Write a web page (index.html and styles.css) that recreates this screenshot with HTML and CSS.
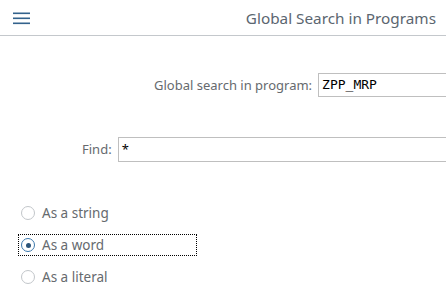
FILE: index.html
```html
<!DOCTYPE html>
<html lang="en">
    <head>
        <meta charset="UTF-8" />
        <meta name="viewport" content="width=device-width, initial-scale=1.0" />
        <title>Global Search in Programs</title>
        <link rel="stylesheet" href="styles.css">
    </head>
    <body>
        <!-- Shell header -->
        <div class="shell-bar">
            <button class="menu-btn" aria-label="Menu">
                <svg width="17" height="13" viewBox="0 0 17 13">
                    <rect x="0" y="0.5" width="17" height="1.6" />
                    <rect x="0" y="5.5" width="17" height="1.6" />
                    <rect x="0" y="10.5" width="17" height="1.6" />
                </svg>
            </button>
            <div class="shell-title">Global Search in Programs</div>
        </div>

        <!-- Selection screen -->
        <div class="screen">
            <div class="field-row row-program">
                <label class="field-label" for="program">Global search in program:</label>
                <div class="field-input mono" id="program">ZPP_MRP</div>
            </div>

            <div class="field-row row-find">
                <label class="field-label" for="find">Find:</label>
                <div class="field-input" id="find">*</div>
            </div>

            <div class="radio-group">
                <div class="radio-row">
                    <span class="radio"></span>
                    <span class="radio-text">As a string</span>
                </div>
                <div class="radio-row focused">
                    <span class="radio checked"></span>
                    <span class="radio-text">As a word</span>
                </div>
                <div class="radio-row">
                    <span class="radio"></span>
                    <span class="radio-text">As a literal</span>
                </div>
            </div>
        </div>
    </body>
</html>
```

FILE: styles.css
```css
/* page */
body {
    margin: 0;
    background-color: #ffffff;
    font-family: "Noto Sans", "Liberation Sans", sans-serif;
    overflow: hidden;
}

/* Shell header */
.shell-bar {
    height: 35px;
    border-bottom: 1px solid #c4c8cc;
    display: flex;
    align-items: center;
    justify-content: space-between;
    padding: 0 10px 0 13px;
}

.menu-btn {
    background: none;
    border: none;
    padding: 0;
    margin-top: 1px;
    display: flex;
}

.menu-btn svg {
    fill: #33628c;
}

.shell-title {
    font-size: 15.3px;
    color: #5b6670;
    margin-top: 1px;
}

/* Selection screen */
.screen {
    padding-top: 37px;
}

.field-row {
    display: flex;
    align-items: center;
    height: 24px;
}

.row-program {
    padding-left: 148px;
}

.row-find {
    margin-top: 40px;
    padding-left: 76px;
}

.field-label {
    font-size: 13px;
    color: #666a6e;
    padding: 0 6px;
    white-space: nowrap;
    flex-shrink: 0;
}

.field-input {
    box-sizing: border-box;
    height: 24px;
    flex: 1;
    min-width: 0;
    border: 1px solid #bfbfbf;
    border-right: none;
    padding: 0 3px;
    font-size: 13px;
    line-height: 22px;
    color: #000000;
}

.row-find .field-input {
    height: 25px;
}

.mono {
    font-family: "DejaVu Sans Mono", "Liberation Mono", monospace;
}

/* Radio buttons */
.radio-group {
    margin-top: 36px;
    padding-left: 18px;
    display: flex;
    flex-direction: column;
    align-items: flex-start;
}

.radio-row {
    display: flex;
    align-items: center;
    height: 22px;
    width: 179px;
    box-sizing: border-box;
    padding-left: 3px;
    margin: 5px 0;
}

.radio-row.focused {
    outline: 1px dotted #000000;
    outline-offset: -1px;
}

.radio {
    box-sizing: border-box;
    width: 14px;
    height: 14px;
    border-radius: 50%;
    border: 1px solid #c2c6ca;
    display: flex;
    align-items: center;
    justify-content: center;
}

.radio.checked {
    border-color: #3c78ac;
}

.radio.checked::after {
    content: "";
    width: 5px;
    height: 5px;
    border-radius: 50%;
    background-color: #2c5479;
}

.radio-text {
    margin-left: 7px;
    font-size: 13.5px;
    color: #666a6e;
}
```
